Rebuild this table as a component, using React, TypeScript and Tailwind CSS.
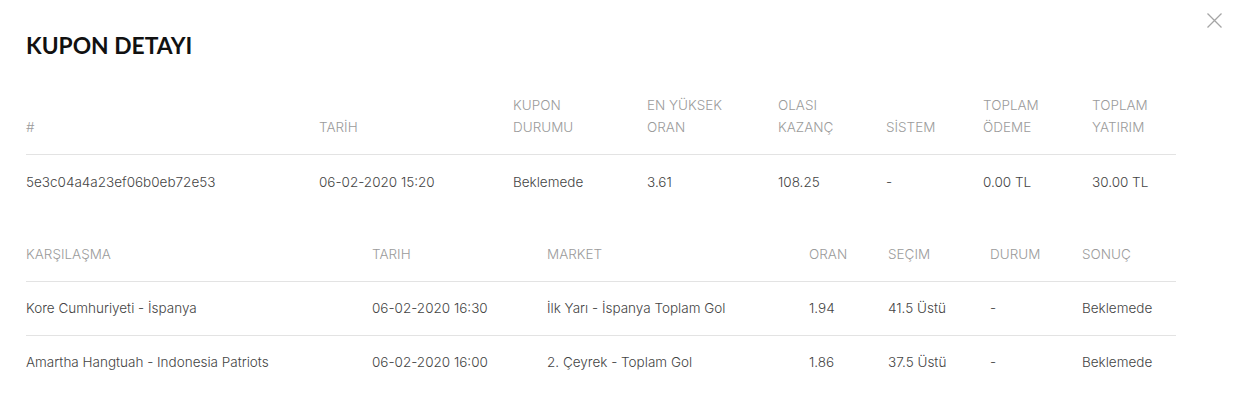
const summaryHead: { label: string[]; w: string }[] = [
  { label: ["#"], w: "w-[293px]" },
  { label: ["TARİH"], w: "w-[194px]" },
  { label: ["KUPON", "DURUMU"], w: "w-[134px]" },
  { label: ["EN YÜKSEK", "ORAN"], w: "w-[131px]" },
  { label: ["OLASI", "KAZANÇ"], w: "w-[108px]" },
  { label: ["SİSTEM"], w: "w-[97px]" },
  { label: ["TOPLAM", "ÖDEME"], w: "w-[109px]" },
  { label: ["TOPLAM", "YATIRIM"], w: "w-[84px]" },
];

const summaryRow = [
  "5e3c04a4a23ef06b0eb72e53",
  "06-02-2020 15:20",
  "Beklemede",
  "3.61",
  "108.25",
  "-",
  "0.00 TL",
  "30.00 TL",
];

const eventHead: { label: string; w: string }[] = [
  { label: "KARŞILAŞMA", w: "w-[346px]" },
  { label: "TARIH", w: "w-[175px]" },
  { label: "MARKET", w: "w-[262px]" },
  { label: "ORAN", w: "w-[79px]" },
  { label: "SEÇIM", w: "w-[102px]" },
  { label: "DURUM", w: "w-[92px]" },
  { label: "SONUÇ", w: "w-[94px]" },
];

const events = [
  ["Kore Cumhuriyeti - İspanya", "06-02-2020 16:30", "İlk Yarı - İspanya Toplam Gol", "1.94", "41.5 Üstü", "-", "Beklemede"],
  ["Amartha Hangtuah - Indonesia Patriots", "06-02-2020 16:00", "2. Çeyrek - Toplam Gol", "1.86", "37.5 Üstü", "-", "Beklemede"],
];

export default function App() {
  return (
    <div className="relative w-[1236px] h-[420px] bg-white font-['Inter',sans-serif] overflow-hidden">
      <button className="absolute right-[14px] top-[13px] text-[#a5a5a5]" aria-label="Kapat">
        <svg width="15" height="15" viewBox="0 0 15 15" fill="none" stroke="currentColor" strokeWidth="1.3">
          <path d="M0.5 0.5 L14.5 14.5 M14.5 0.5 L0.5 14.5" />
        </svg>
      </button>

      <div className="pl-[26px] pt-[31px]">
        <h2 className="font-['Lato',sans-serif] text-[22.8px] leading-[28px] font-bold text-[#111]">KUPON DETAYI</h2>

        {/* Coupon summary */}
        <table className="mt-[19px] w-[1150px] table-fixed border-collapse text-[13.5px]">
          <thead>
            <tr className="border-b border-[#e3e3e3]">
              {summaryHead.map((h, i) => (
                <th key={i} className={`${h.w} py-4 text-left align-bottom font-light leading-[22px] text-[#9b9b9b]`}>
                  {h.label.map((l) => (
                    <div key={l}>{l}</div>
                  ))}
                </th>
              ))}
            </tr>
          </thead>
          <tbody>
            <tr>
              {summaryRow.map((c, i) => (
                <td key={i} className="py-4 leading-[22px] font-light text-[#444]">
                  {c}
                </td>
              ))}
            </tr>
          </tbody>
        </table>

        {/* Events */}
        <table className="mt-[19px] w-[1150px] table-fixed border-collapse text-[13.5px]">
          <thead>
            <tr className="border-b border-[#e3e3e3]">
              {eventHead.map((h) => (
                <th key={h.label} className={`${h.w} pt-[15px] pb-4 text-left font-light leading-[22px] text-[#9b9b9b]`}>
                  {h.label}
                </th>
              ))}
            </tr>
          </thead>
          <tbody>
            {events.map((row, r) => (
              <tr key={r} className={r < events.length - 1 ? "border-b border-[#e3e3e3]" : ""}>
                {row.map((c, i) => (
                  <td key={i} className="pt-[15px] pb-4 leading-[22px] font-light text-[#444]">
                    {c}
                  </td>
                ))}
              </tr>
            ))}
          </tbody>
        </table>
      </div>
    </div>
  );
}
